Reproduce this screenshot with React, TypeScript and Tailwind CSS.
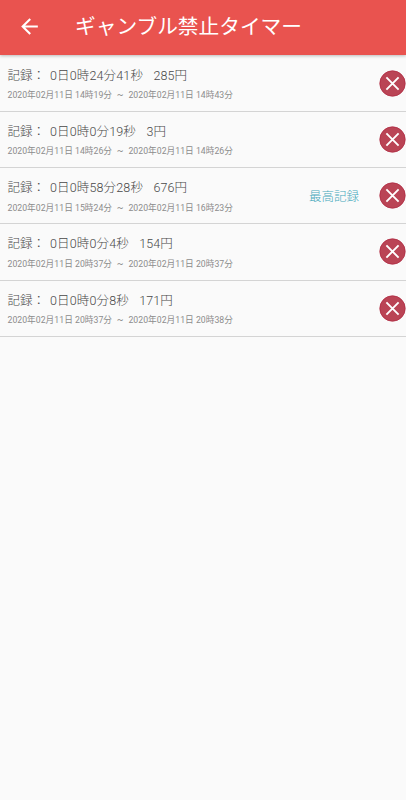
type GameRecord = {
  elapsed: string;
  amount: string;
  start: string;
  end: string;
  best?: boolean;
};

const records: GameRecord[] = [
  { elapsed: "0日0時24分41秒", amount: "285円", start: "2020年02月11日 14時19分", end: "2020年02月11日 14時43分" },
  { elapsed: "0日0時0分19秒", amount: "3円", start: "2020年02月11日 14時26分", end: "2020年02月11日 14時26分" },
  { elapsed: "0日0時58分28秒", amount: "676円", start: "2020年02月11日 15時24分", end: "2020年02月11日 16時23分", best: true },
  { elapsed: "0日0時0分4秒", amount: "154円", start: "2020年02月11日 20時37分", end: "2020年02月11日 20時37分" },
  { elapsed: "0日0時0分8秒", amount: "171円", start: "2020年02月11日 20時37分", end: "2020年02月11日 20時38分" },
];

function BackIcon() {
  return (
    <svg width="25" height="25" viewBox="0 0 24 24" fill="white">
      <path d="M20 11H7.83l5.59-5.59L12 4l-8 8 8 8 1.41-1.41L7.83 13H20v-2z" />
    </svg>
  );
}

function DeleteIcon() {
  return (
    <svg width="27" height="27" viewBox="0 0 27 27" fill="none">
      <circle cx="13.5" cy="13.5" r="12.7" fill="#ba4455" stroke="#b02b42" strokeWidth="0.8" />
      <path d="M7.4 7.4l12.2 12.2M19.6 7.4L7.4 19.6" stroke="white" strokeWidth="1.9" />
    </svg>
  );
}

function RecordRow({ record }: { record: GameRecord }) {
  return (
    <li className="flex h-[56.25px] items-center border-b border-[#d4d4d4] pl-[7.5px]">
      <div className="flex-1 whitespace-pre pt-[1.5px]">
        <p className="text-[12.5px] font-light leading-[18px] text-[#484848]">
          <span className="mr-[2px]">記録： </span>
          <span className="tracking-[0.14px]">{record.elapsed}</span>
          <span className="ml-[1px] tracking-[0.08px]">   {record.amount}</span>
        </p>
        <p className="mt-[4.5px] text-[8.7px] leading-[12px] tracking-[0.02px] text-[#8c8c8c]">
          {record.start}
          <span className="inline-block w-[16.4px] text-center text-[10px]">~</span>
          {record.end}
        </p>
      </div>
      {record.best && (
        <span className="mr-5 pt-[2px] text-[12.5px] font-light leading-[18px] text-[#45a8bb]">最高記録</span>
      )}
      <button type="button" aria-label="削除" className="shrink-0">
        <DeleteIcon />
      </button>
    </li>
  );
}

export default function App() {
  return (
    <div className="min-h-screen bg-[#fafafa] font-[Roboto,'Noto_Sans_CJK_JP',sans-serif]">
      <header className="relative flex h-[54.5px] items-center bg-[#e9534f] pb-[2.5px] pl-[16.5px] shadow-[0_1px_3px_rgba(0,0,0,0.25)]">
        <button type="button" aria-label="戻る">
          <BackIcon />
        </button>
        <h1 className="ml-[33.5px] pt-[2.5px] text-[20.7px] leading-[30px] text-white">ギャンブル禁止タイマー</h1>
      </header>
      <ul className="pt-[1px]">
        {records.map((record, index) => (
          <RecordRow key={index} record={record} />
        ))}
      </ul>
    </div>
  );
}
